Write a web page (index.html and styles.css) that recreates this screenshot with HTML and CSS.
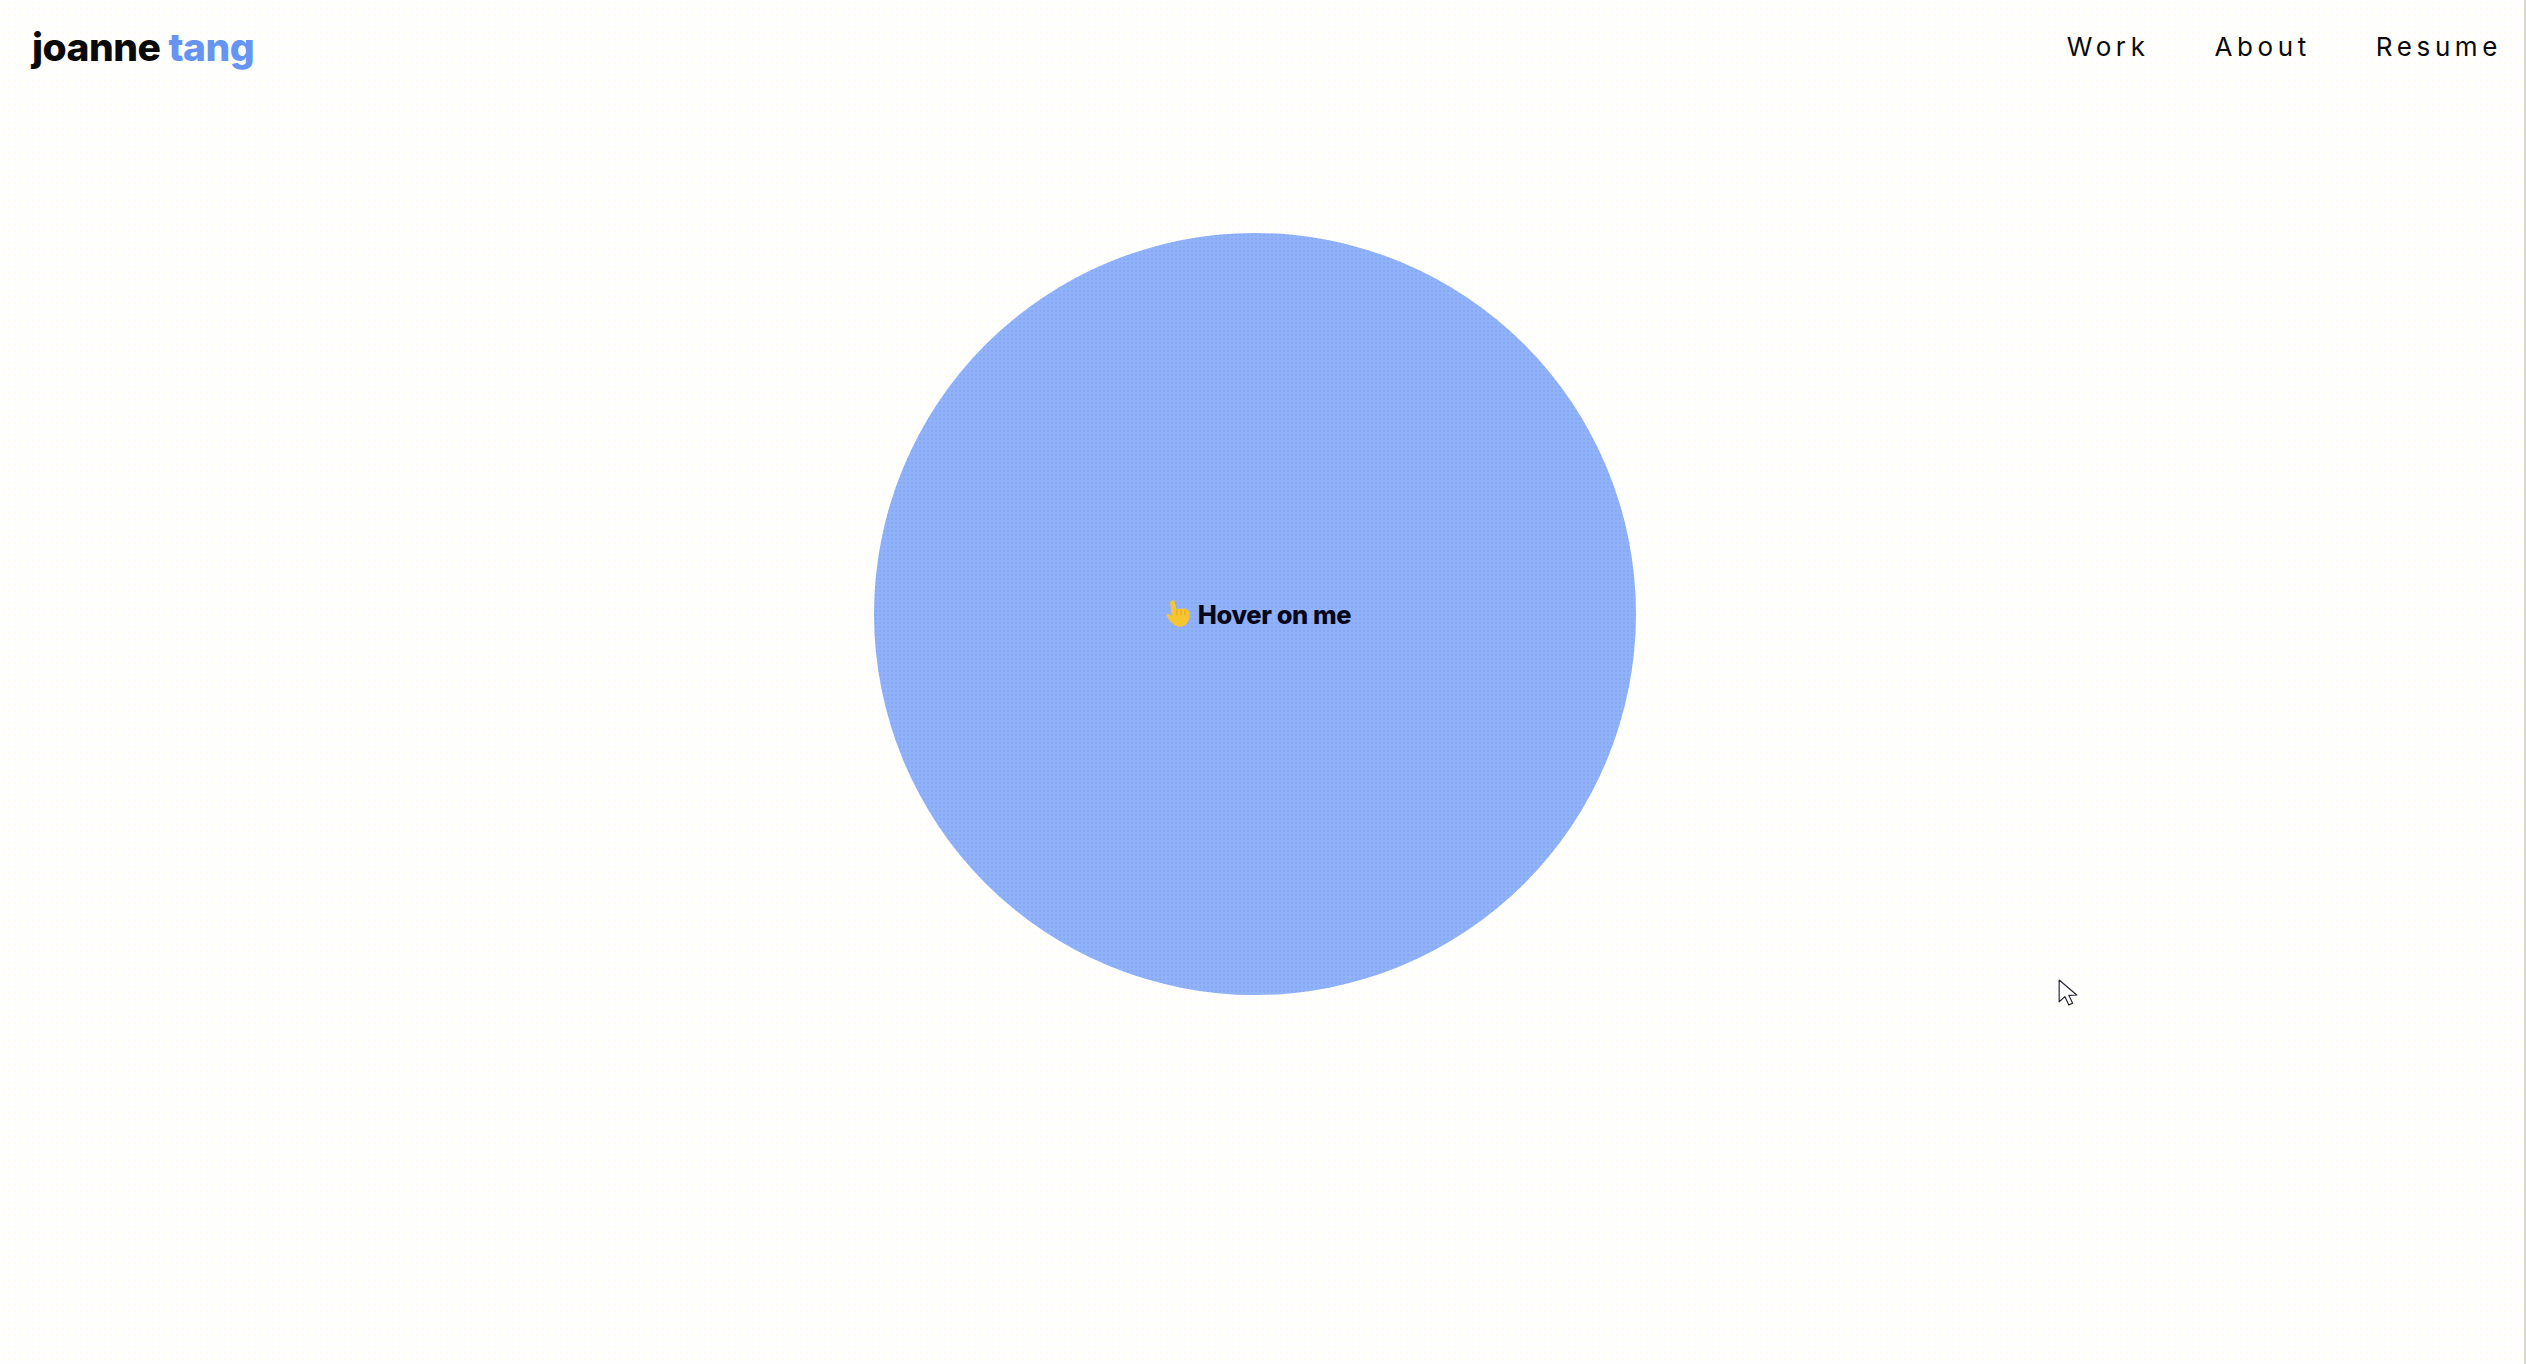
FILE: index.html
```html
<!DOCTYPE html>
<html lang="en">
<head>
<meta charset="utf-8">
<title>joanne tang</title>
<link rel="stylesheet" href="styles.css">
</head>
<body>
<div class="page">
  <header class="header">
    <a class="logo" href="#">joanne <span class="logo-accent">tang</span></a>
    <nav class="nav">
      <a class="nav-link" href="#">Work</a>
      <a class="nav-link" href="#">About</a>
      <a class="nav-link" href="#">Resume</a>
    </nav>
  </header>
  <main class="hero">
    <div class="circle">
      <div class="hover-label">
        <svg class="hand" viewBox="0 0 24 26" aria-hidden="true">
          <path fill="#f7c531" d="M7 1.500c1-.8 2.300-.2 2.600 1l1.500 6.200 6.400-.4c2.700 0 4.900 2 5 4.800.2 3-.6 6-2.600 8.400-2.300 2.700-6.300 3.300-9.500 1.700-3-1.500-5.900-5.200-7.700-8.300-.7-1.100.6-2.400 1.800-1.700l2.500 1.600L5.700 3.300c-.2-.7.500-1.400 1.300-1.800z"/>
          <path fill="none" stroke="#e3a624" stroke-width="1" d="M11.500 9v5M15 9v5M18.500 9.500V14"/>
        </svg>
        <span class="hover-text">Hover on me</span>
      </div>
    </div>
  </main>
  <svg class="cursor" viewBox="0 0 20 28" aria-hidden="true">
    <path fill="#fff" stroke="#23232b" stroke-width="1.100" stroke-linejoin="round" d="M1 1v21l5.500-5 3.800 8 3.700-1.600-3.700-7.600 7.700-.3z"/>
  </svg>
</div>
</body>
</html>
```
FILE: styles.css
```css
* { box-sizing: border-box; }
html, body { margin: 0; height: 100%; }
body {
  background-color: #fefefe;
  font-family: "Inter", "Liberation Sans", sans-serif;
  color: #0a0a0a;
}
.page {
  position: relative;
  height: 1364px;
  overflow: hidden;
  display: flex;
  flex-direction: column;
  border-right: 2px solid #d8d8d0;
  background-image: radial-gradient(circle, #fffde6 0.6px, transparent 1px);
  background-size: 6px 6px;
}
.header {
  display: flex;
  justify-content: space-between;
  align-items: center;
  height: 94px;
  padding: 0 22px 0 32px;
}
.logo {
  font-size: 39px;
  font-weight: 800;
  letter-spacing: -0.5px;
  color: #0a0a0a;
  text-decoration: none;
  position: relative;
  top: -1px;
}
.logo-accent { color: #6594f2; }
.nav { display: flex; gap: 65px; position: relative; top: -1px; }
.nav-link {
  font-size: 26px;
  font-weight: 400;
  letter-spacing: 4.600px;
  color: #0a0a0a;
  text-decoration: none;
}
.hero {
  display: flex;
  justify-content: center;
  padding-top: 139px;
  padding-right: 14px;
}
.circle {
  width: 762px;
  height: 762px;
  border-radius: 50%;
  background-color: #90b2fb;
  background-image: radial-gradient(circle, #86a6ee 0.6px, transparent 1px);
  background-size: 4px 4px;
  display: flex;
  align-items: center;
  justify-content: center;
}
.hover-label {
  display: flex;
  align-items: center;
  gap: 6px;
  position: relative;
  left: 2px;
}
.hand { width: 29px; height: 30px; }
.hover-text {
  font-size: 25.500px;
  font-weight: 800;
  letter-spacing: -0.4px;
  color: #08081a;
}
.cursor {
  position: absolute;
  left: 2058px;
  top: 979px;
  width: 21px;
  height: 29px;
}
```
